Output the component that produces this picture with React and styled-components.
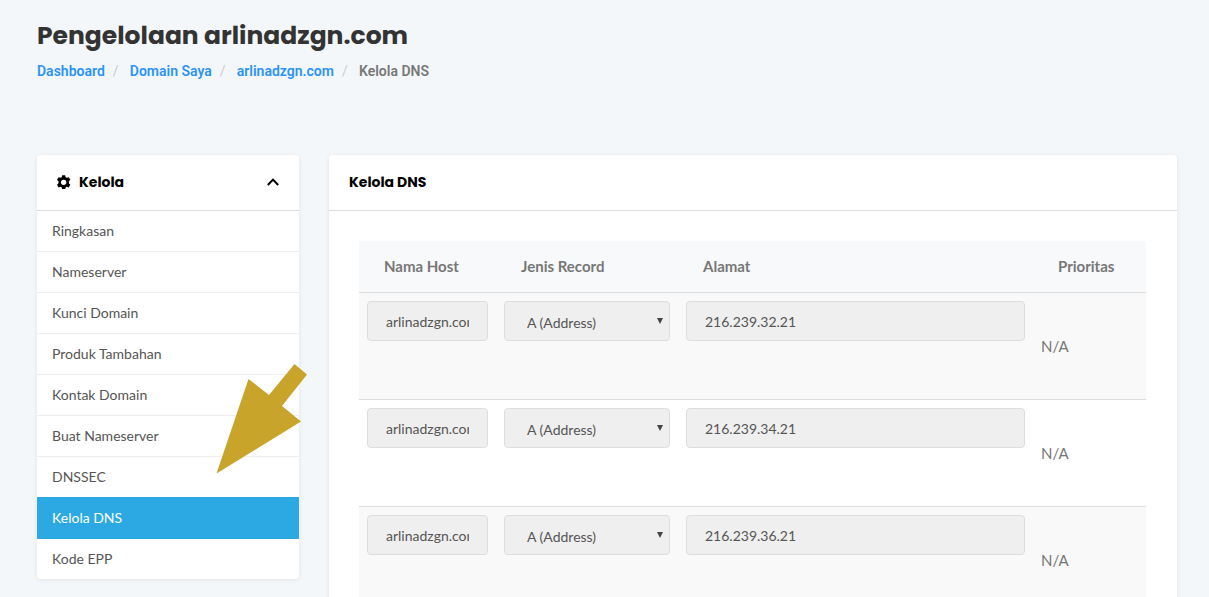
import React, { useState } from 'react';
import styled, { createGlobalStyle } from 'styled-components';

const GlobalStyle = createGlobalStyle`
  * {
    box-sizing: border-box;
  }

  body {
    margin: 0;
    background: #f3f7fa;
    color: #777;
    font-family: Lato, sans-serif;
    font-size: 14px;
    line-height: 20px;
  }
`;

const Page = styled.div`
  padding: 19px 32px 30px 37px;
`;

const Title = styled.h1`
  margin: 0;
  color: #333;
  font-family: Poppins, Inter, sans-serif;
  font-size: 25px;
  font-weight: 700;
  line-height: 34px;
`;

const Breadcrumb = styled.nav`
  display: flex;
  margin: 8px 0 74px;
  font-family: Roboto, sans-serif;
  font-weight: 600;
`;

const Crumb = styled.a`
  color: #2b93f5;
  text-decoration: none;
`;

const CurrentCrumb = styled.span`
  color: #777;
`;

const Slash = styled.span`
  width: 25px;
  padding-left: 8px;
  color: #ccc;
  font-weight: 400;
`;

const Columns = styled.div`
  display: grid;
  grid-template-columns: 262px minmax(0, 1fr);
  align-items: start;
  gap: 30px;
`;

const Panel = styled.section`
  position: relative;
  background: #fff;
  border-radius: 4px;
  box-shadow: 0 1px 4px rgba(0, 0, 0, 0.08);
`;

const PanelHeading = styled.h2`
  display: flex;
  align-items: center;
  height: 56px;
  margin: 0;
  padding: 0 20px 1px;
  border-bottom: 1px solid #ddd;
  color: #000;
  font-family: Poppins, Inter, sans-serif;
  font-size: 14px;
  font-weight: 700;
`;

const ToggleButton = styled.button`
  display: flex;
  flex: 1;
  align-items: center;
  gap: 8px;
  padding: 0;
  border: 0;
  background: none;
  color: inherit;
  font: inherit;
  cursor: pointer;
`;

const Chevron = styled.svg`
  margin-left: auto;
`;

const Menu = styled.ul`
  margin: 0;
  padding: 0;
  list-style: none;
`;

const MenuItem = styled.li`
  border-bottom: 1px solid #eee;

  &:last-child {
    border-bottom: 0;
  }
`;

const MenuLink = styled.a`
  display: block;
  margin: ${(props) => (props.$active ? '-1px 0' : '0')};
  padding: ${(props) => (props.$active ? '11px 15px' : '10px 15px')};
  background: ${(props) => (props.$active ? '#2ca9e3' : 'transparent')};
  color: ${(props) => (props.$active ? '#fff' : '#555')};
  text-decoration: none;
`;

const Pointer = styled.svg`
  position: absolute;
  top: 208px;
  left: 179px;
  pointer-events: none;
`;

const PanelBody = styled.div`
  padding: 30px 31px 30px 30px;
`;

const Table = styled.table`
  width: 100%;
  border-collapse: separate;
  border-spacing: 0;
  table-layout: fixed;
  font-size: 15px;
`;

const HeadCell = styled.th`
  width: ${(props) => props.$width || 'auto'};
  height: 52px;
  padding: 0 0 2px 25px;
  border-bottom: 1px solid #ddd;
  background: #f8f9fb;
  font-weight: 700;
  text-align: left;
`;

const Row = styled.tr`
  background: #fff;

  &:nth-child(odd) {
    background: #f9f9f9;
  }
`;

const Cell = styled.td`
  height: 107px;
  padding: 8px;
  border-bottom: 1px solid #ddd;
  vertical-align: ${(props) => (props.$middle ? 'middle' : 'top')};
`;

const Field = styled.input`
  display: block;
  width: 100%;
  height: 40px;
  padding: 0 18px;
  border: 1px solid #ddd;
  border-radius: 4px;
  background: #efefef;
  color: #555;
  font: 14px Lato, sans-serif;
`;

const SelectWrap = styled.div`
  position: relative;
`;

const Select = styled.select`
  width: 100%;
  height: 40px;
  padding: 2px 22px 0;
  border: 1px solid #ddd;
  border-radius: 4px;
  background: #efefef;
  color: #555;
  font: 14px Lato, sans-serif;
  opacity: 1;
  appearance: none;
`;

const SelectArrow = styled.svg`
  position: absolute;
  top: 17px;
  right: 7px;
  pointer-events: none;
`;

const menu = [
  'Ringkasan',
  'Nameserver',
  'Kunci Domain',
  'Produk Tambahan',
  'Kontak Domain',
  'Buat Nameserver',
  'DNSSEC',
  'Kelola DNS',
  'Kode EPP',
];

const crumbs = ['Dashboard', 'Domain Saya', 'arlinadzgn.com'];

const addresses = ['216.239.32.21', '216.239.34.21', '216.239.36.21'];

const GearIcon = () => (
  <svg width="14" height="14" viewBox="0.8 0.2 13 13" aria-hidden="true">
    <path
      fill="currentColor"
      fillRule="evenodd"
      d="M5.6 0.4h2.8l.4 1.8 1.1.6 1.8-.6 1.5 2.5-1.4 1.3v1.9l1.4 1.4-1.5 2.4-1.8-.5-1.1.6-.4 1.8H5.6l-.4-1.8-1.1-.6-1.8.5-1.5-2.4L2.2 7.9V6L.8 4.7l1.5-2.5 1.8.6 1.1-.6zM7 4.5a2.5 2.5 0 1 0 0 5 2.5 2.5 0 0 0 0-5z"
    />
  </svg>
);

const App = () => {
  const [open, setOpen] = useState(true);

  return (
    <Page>
      <GlobalStyle />
      <Title>Pengelolaan arlinadzgn.com</Title>
      <Breadcrumb aria-label="Breadcrumb">
        {crumbs.map((crumb) => (
          <React.Fragment key={crumb}>
            <Crumb href="#">{crumb}</Crumb>
            <Slash>/</Slash>
          </React.Fragment>
        ))}
        <CurrentCrumb>Kelola DNS</CurrentCrumb>
      </Breadcrumb>

      <Columns>
        <Panel>
          <PanelHeading>
            <ToggleButton aria-expanded={open} onClick={() => setOpen(!open)}>
              <GearIcon />
              Kelola
              <Chevron width="12" height="8" viewBox="0 0 12 8" aria-hidden="true">
                <path d="M0.8 7L6 1.6 11.2 7" fill="none" stroke="currentColor" strokeWidth="2" />
              </Chevron>
            </ToggleButton>
          </PanelHeading>
          {open && (
            <Menu>
              {menu.map((item) => (
                <MenuItem key={item}>
                  <MenuLink href="#" $active={item === 'Kelola DNS'}>{item}</MenuLink>
                </MenuItem>
              ))}
            </Menu>
          )}
          <Pointer width="92" height="112" viewBox="0 0 92 112" aria-hidden="true">
            <path d="M78.500 1L91 11.500 66 43 85 58.500 0.500 110.500 32.500 16 53 32z" fill="#c8a42b" />
          </Pointer>
        </Panel>

        <Panel>
          <PanelHeading>Kelola DNS</PanelHeading>
          <PanelBody>
            <Table>
              <thead>
                <tr>
                  <HeadCell $width="137px">Nama Host</HeadCell>
                  <HeadCell $width="182px">Jenis Record</HeadCell>
                  <HeadCell>Alamat</HeadCell>
                  <HeadCell $width="113px">Prioritas</HeadCell>
                </tr>
              </thead>
              <tbody>
                {addresses.map((address) => (
                  <Row key={address}>
                    <Cell>
                      <Field aria-label="Nama Host" defaultValue="arlinadzgn.com" disabled />
                    </Cell>
                    <Cell>
                      <SelectWrap>
                        <Select aria-label="Jenis Record" disabled>
                          <option>A (Address)</option>
                        </Select>
                        <SelectArrow width="6" height="6" viewBox="0 0 6 6" aria-hidden="true">
                          <path d="M0 0h6L3 6z" fill="#444" />
                        </SelectArrow>
                      </SelectWrap>
                    </Cell>
                    <Cell>
                      <Field aria-label="Alamat" defaultValue={address} disabled />
                    </Cell>
                    <Cell $middle>N/A</Cell>
                  </Row>
                ))}
              </tbody>
            </Table>
          </PanelBody>
        </Panel>
      </Columns>
    </Page>
  );
};

export default App;
